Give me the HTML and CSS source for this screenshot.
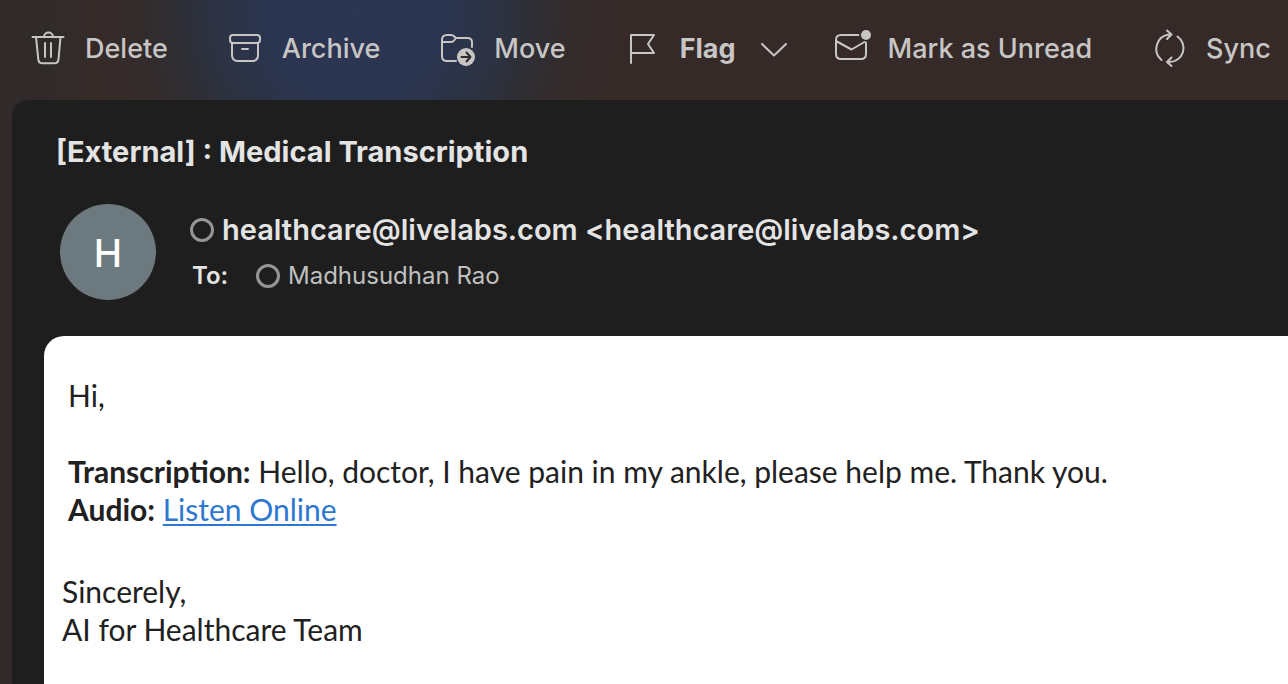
FILE: index.html
```html
<!DOCTYPE html>
<html lang="en">
<head>
<meta charset="utf-8">
<meta name="viewport" content="width=device-width, initial-scale=1">
<title>[External] : Medical Transcription</title>
<link rel="stylesheet" href="styles.css">
</head>
<body>
<nav class="toolbar" aria-label="Message actions">
  <button class="action" type="button">
    <svg class="icon" viewBox="0 0 36 36"><path d="M1.500 6h31M13 6c0-6 9-6 9 0M5 6l2.300 22.300q.4 4 4.400 4h11.400q4 0 4.400-4L29.500 6M14 12v14M20 12v14"/></svg>
    <span>Delete</span>
  </button>
  <button class="action" type="button">
    <svg class="icon" viewBox="0 0 36 36"><rect x="2" y="4" width="30" height="8" rx="3"/><path d="M4 12v12q0 6 6 6h14q6 0 6-6V12M14 18h6"/></svg>
    <span>Archive</span>
  </button>
  <button class="action" type="button">
    <svg class="icon" viewBox="0 0 36 36"><path d="M16 30H7q-5 0-5-5V9q0-5 5-5h4q2 0 3.300 1.500L16 7h11.500q4.500 0 4.500 4.500V16M2 11h9q2 0 3-1.500L16 7"/><circle class="solid" cx="26" cy="26" r="9"/><path class="cut" d="M21.500 26h9M26.500 21.500l4 4.500-4 4.500"/></svg>
    <span>Move</span>
  </button>
  <div class="split">
    <button class="action action-strong" type="button">
      <svg class="icon" viewBox="0 0 36 36"><path d="M5 32V4h23l-6 9 6 9H5"/></svg>
      <span>Flag</span>
    </button>
    <button class="more" type="button" aria-label="Flag options">
      <svg class="chevron" viewBox="0 0 28 36"><path d="M2 13l12 11.500L26 13"/></svg>
    </button>
  </div>
  <button class="action" type="button">
    <svg class="icon" viewBox="0 0 36 36"><path d="M24.500 4H7Q2 4 2 9v14q0 5 5 5h20q5 0 5-5V11.500M2 10l15.500 8.500L30.500 11"/><circle class="solid" cx="32" cy="4" r="5"/></svg>
    <span>Mark as Unread</span>
  </button>
  <button class="action" type="button">
    <svg class="icon" viewBox="0 0 36 36"><path d="M9.500 29A14.500 14.500 0 0 1 17 3.500h2.500M15 -.5l4.500 4L15 8M25.500 5.500A14 14 0 0 1 17.500 31H15M19.500 26.500L15 31l4.500 4"/></svg>
    <span>Sync</span>
  </button>
</nav>
<main class="message">
  <header class="head">
    <h1 class="subject">[External] : Medical Transcription</h1>
    <div class="sender">
      <div class="avatar" aria-hidden="true">H</div>
      <div class="people">
        <div class="from"><span class="presence"></span><span>healthcare@livelabs.com &lt;healthcare@livelabs.com&gt;</span></div>
        <div class="to"><b class="to-label">To:</b><span class="presence"></span><span>Madhusudhan Rao</span></div>
      </div>
    </div>
  </header>
  <article class="body">
    <div class="content">
      <p class="greeting">Hi,</p>
      <p><strong>Transcription:</strong> Hello, doctor, I have pain in my ankle, please help me. Thank you.</p>
      <p><strong>Audio:</strong> <a href="#audio">Listen Online</a></p>
    </div>
    <div class="signature">
      <p>Sincerely,</p>
      <p>AI for Healthcare Team</p>
    </div>
  </article>
</main>
</body>
</html>
```
FILE: styles.css
```css
* {
  box-sizing: border-box;
}

body {
  display: flex;
  flex-direction: column;
  min-height: 100vh;
  margin: 0;
  overflow-x: hidden;
  font-family: Inter, "Liberation Sans", sans-serif;
  color: #e4e4e4;
  background:
    radial-gradient(ellipse 260px 260px at 355px 10px, #2b3653 0%, #2b3550 35%, #2c3240 58%, rgba(46, 47, 54, 0.85) 70%, rgba(50, 44, 46, 0.5) 84%, rgba(53, 42, 40, 0) 100%),
    linear-gradient(90deg, #302b2a 0, #302b2a 50px, #352a28 90px, #352a28 100%);
}

h1,
p {
  margin: 0;
}

.toolbar {
  display: flex;
  align-items: center;
  gap: 60px;
  height: 100px;
  padding: 0 16px 2px 31px;
}

.action,
.more {
  display: flex;
  flex: none;
  align-items: center;
  gap: 18px;
  padding: 0;
  border: 0;
  background: none;
  color: #c8c6c5;
  font: 500 27px/36px Inter, "Liberation Sans", sans-serif;
  white-space: nowrap;
}

.action-strong {
  font-weight: 700;
}

.split {
  display: flex;
  gap: 24px;
  margin-right: -14px;
}

.icon,
.chevron {
  width: 36px;
  height: 36px;
  overflow: visible;
  fill: none;
  stroke: currentColor;
  stroke-width: 2;
  stroke-linecap: round;
  stroke-linejoin: round;
}

.chevron {
  width: 28px;
}

.solid {
  fill: currentColor;
  stroke: none;
}

.cut {
  stroke: #302d30;
}

.message {
  display: flex;
  flex: 1;
  flex-direction: column;
  margin-left: 12px;
  padding-left: 32px;
  border-top-left-radius: 16px;
  background: #1e1e1e;
}

.head {
  padding: 32px 12px 36px;
}

.subject {
  font-size: 29px;
  font-weight: 700;
  line-height: 40px;
}

.sender {
  display: flex;
  align-items: center;
  gap: 34px;
  margin-top: 32px;
  padding-left: 4px;
}

.avatar {
  flex: none;
  width: 96px;
  height: 96px;
  border-radius: 50%;
  background: #6c7a80;
  color: #fff;
  font-size: 38px;
  font-weight: 500;
  line-height: 98px;
  text-align: center;
}

.people {
  min-width: 0;
}

.from,
.to {
  display: flex;
  align-items: center;
  gap: 8px;
  white-space: nowrap;
}

.from {
  font-size: 29px;
  font-weight: 600;
  line-height: 48px;
}

.to {
  color: #c0c0c0;
  font-size: 24px;
  line-height: 44px;
}

.to-label {
  width: 58px;
  padding-left: 2px;
  color: #e4e4e4;
  font-weight: 600;
}

.presence {
  flex: none;
  width: 24px;
  height: 24px;
  border: 3px solid #979593;
  border-radius: 50%;
}

.body {
  flex: 1;
  padding: 40px 18px 32px;
  border-top-left-radius: 20px;
  background: #fff;
  color: #212121;
  font: 400 30px/38px Lato, "Open Sans", sans-serif;
}

.content {
  padding-left: 6px;
}

.content strong {
  font-weight: 700;
}

.greeting {
  margin-bottom: 38px;
}

.signature {
  margin-top: 44px;
}

.body a {
  color: #2e77d0;
  text-underline-offset: 3px;
  text-decoration-thickness: 2px;
}
```
